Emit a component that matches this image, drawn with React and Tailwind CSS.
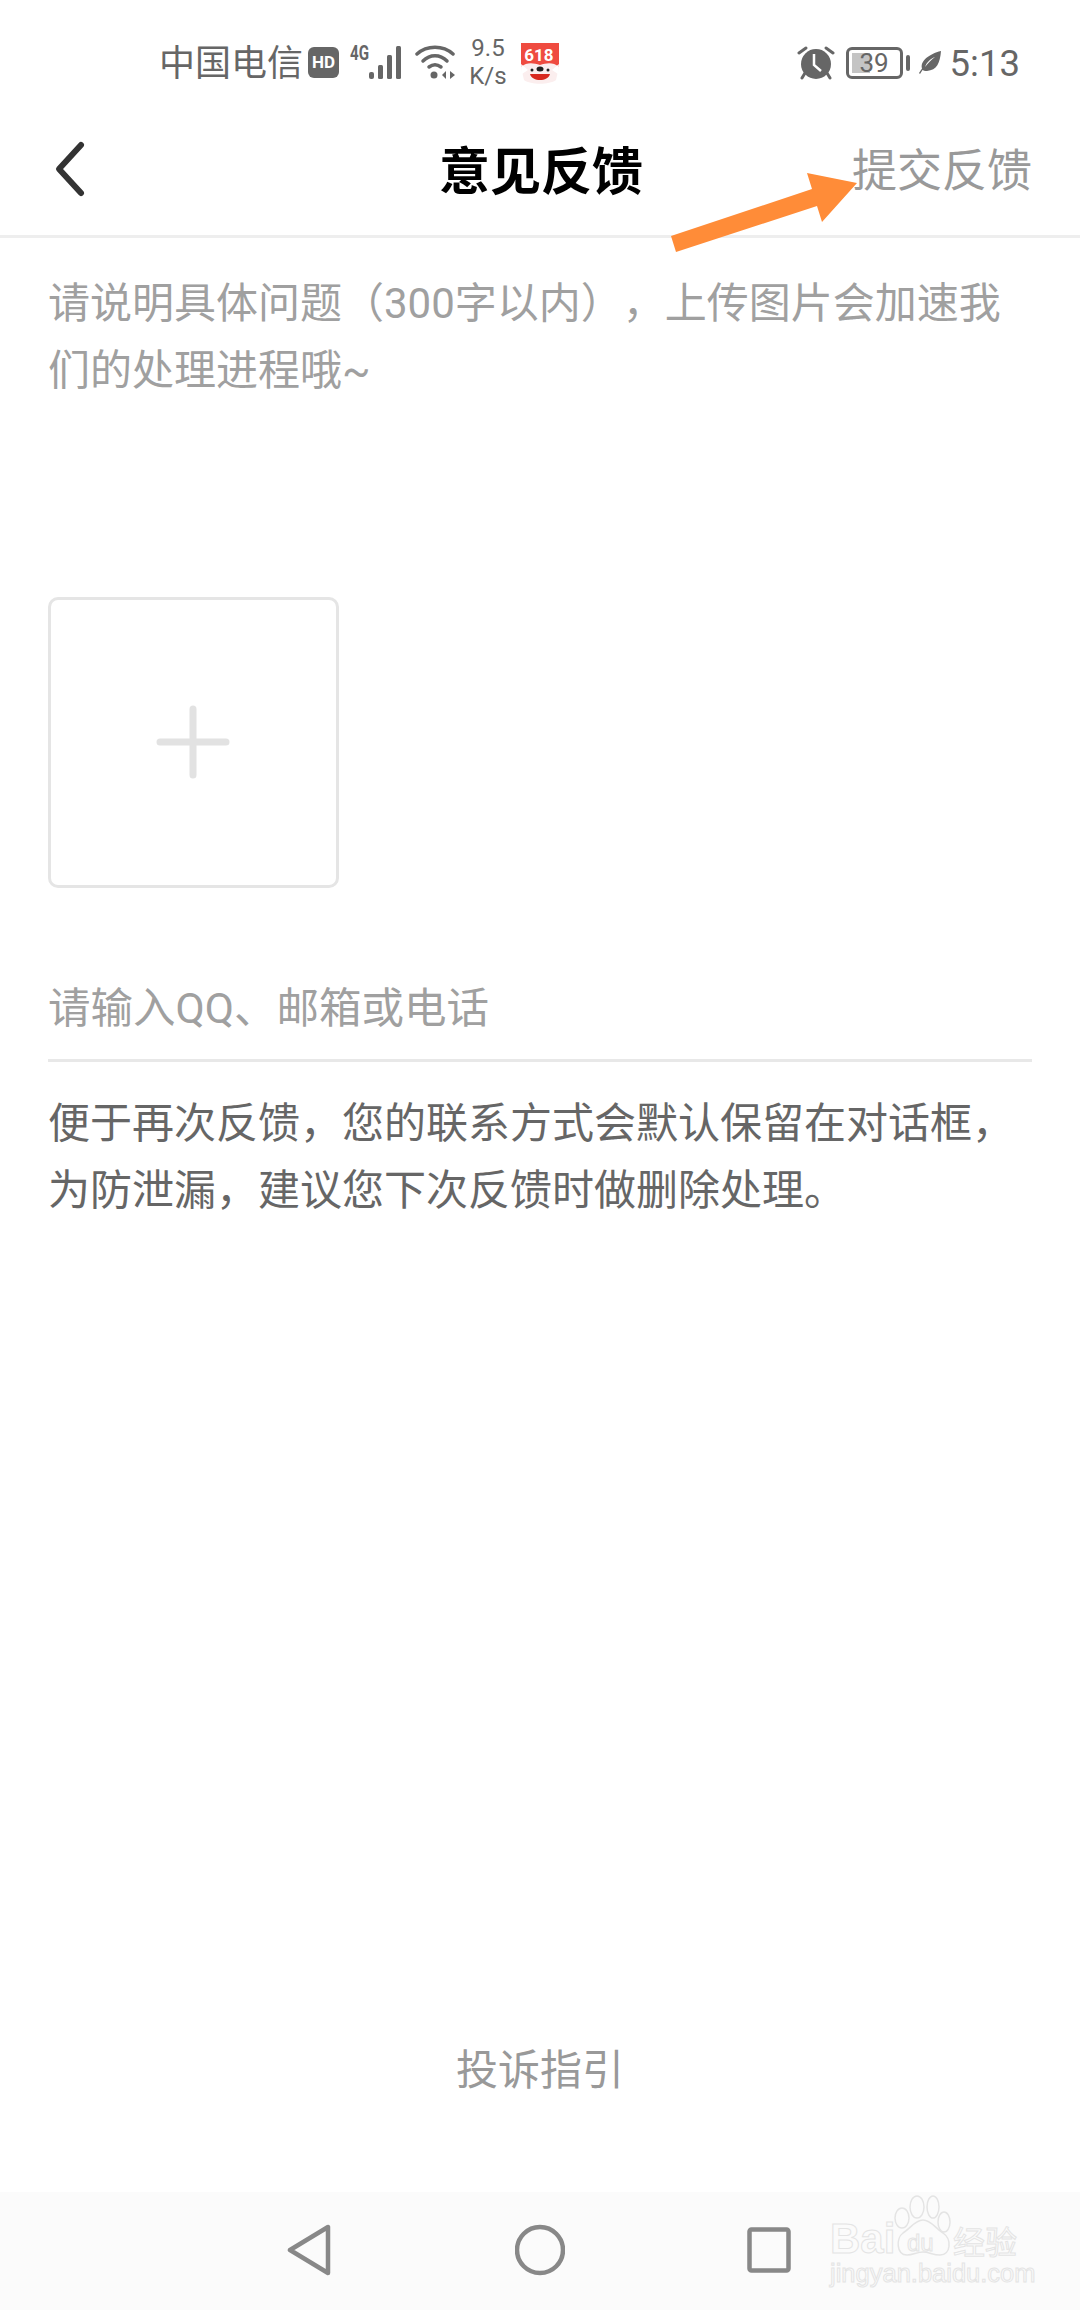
const cjk = "font-['Roboto','Noto_Sans_CJK_SC',sans-serif]";

function SignalIcon() {
  return (
    <svg width="56" height="36" viewBox="0 0 56 36" fill="#666" overflow="visible">
      <text x="0" y="16" fontSize="20" fontWeight="700" fontFamily="Roboto, sans-serif" textLength="19" lengthAdjust="spacingAndGlyphs">4G</text>
      <rect x="19" y="28" width="5" height="7" rx="2" />
      <rect x="28" y="21" width="5" height="14" rx="1.5" />
      <rect x="37" y="11" width="5" height="24" rx="1.5" />
      <rect x="46" y="2" width="5" height="33" rx="1.5" />
    </svg>
  );
}

function WifiIcon() {
  return (
    <svg width="42" height="36" viewBox="0 0 42 36" fill="none" stroke="#666" strokeWidth="3.5" strokeLinecap="round">
      <path d="M2 10C12 1 28 1 38 10" />
      <path d="M8 17C15 10 25 10 32 17" />
      <path d="M14 23C18 20 22 20 26 23" />
      <circle cx="19" cy="31" r="3.5" fill="#666" stroke="none" />
      <path d="M31 27V35L27 31Z" fill="#666" stroke="none" />
      <path d="M35 27V35L40 31Z" fill="#666" stroke="none" />
    </svg>
  );
}

function Badge618() {
  return (
    <svg width="38" height="42" viewBox="0 0 38 42">
      <rect x="0" y="0" width="38" height="24" fill="#ef4b40" />
      <text x="18" y="18" textAnchor="middle" fontSize="17" fontWeight="700" fill="#fff" fontFamily="Roboto, sans-serif">618</text>
      <path d="M0 24C6 19 12 20 19 22C26 20 32 19 38 24L35 37C28 42 10 42 3 37Z" fill="#fbeeee" />
      <path d="M0 21L7 27L1 31Z" fill="#fff" />
      <path d="M38 21L31 27L37 31Z" fill="#fff" />
      <ellipse cx="19" cy="26" rx="3.5" ry="2.5" fill="#222" />
      <circle cx="11" cy="27" r="1.5" fill="#222" />
      <circle cx="27" cy="27" r="1.5" fill="#222" />
      <path d="M9 31H29C27 39 11 39 9 31Z" fill="#d8281e" />
    </svg>
  );
}

function AlarmIcon() {
  return (
    <svg width="38" height="34" viewBox="0 0 38 34">
      <path d="M2 7L9 2" stroke="#666" strokeWidth="3" strokeLinecap="round" />
      <path d="M36 7L29 2" stroke="#666" strokeWidth="3" strokeLinecap="round" />
      <path d="M8 27L5 32M30 27L33 32" stroke="#666" strokeWidth="3" strokeLinecap="round" />
      <circle cx="19" cy="18" r="15" fill="#666" />
      <path d="M17 8V19L24 25" fill="none" stroke="#fff" strokeWidth="2.5" />
    </svg>
  );
}

function LeafIcon() {
  return (
    <svg width="22" height="24" viewBox="0 0 22 24" fill="#666">
      <path d="M22 0C21 12 18 19 8 20C6 20 4 19.5 3.5 19L1 23L0 22L3 17.5C1 10 10 3 22 0ZM6 16C9 12 12 9 16 6C11 8 8 11 6 16Z" fillRule="evenodd" />
    </svg>
  );
}

function StatusBar() {
  return (
    <div className={`h-[110px] flex items-start pt-[44px] pl-[159px] pr-[60px] text-[#666] ${cjk}`}>
      <span className="text-[36px] leading-[40px] w-[140px] whitespace-nowrap">中国电信</span>
      <span className="ml-[9px] mt-[3px] w-[31px] h-[31px] rounded-[6px] bg-[#666] text-white text-[17px] font-bold leading-[31px] text-center">HD</span>
      <span className="ml-[11px] flex"><SignalIcon /></span>
      <span className="ml-[9px] flex"><WifiIcon /></span>
      <span className="ml-[12px] -mt-[10px] w-[38px] flex flex-col items-center text-[24px] leading-[28px] whitespace-nowrap">
        <span>9.5</span>
        <span>K/s</span>
      </span>
      <span className="ml-[14px] -mt-[1px] flex"><Badge618 /></span>
      <span className="ml-auto flex items-center h-[38px]">
        <AlarmIcon />
        <span className="ml-[11px] flex items-center gap-[3px]">
          <span className="relative w-[57px] h-[32px] border-[3px] border-[#666] rounded-[6px] overflow-hidden flex items-center justify-center">
            <span className="absolute left-[3px] top-[3px] bottom-[3px] w-[18px] bg-[#c4c4c4]"></span>
            <span className="relative text-[26px] leading-none">39</span>
          </span>
          <span className="w-[4px] h-[16px] bg-[#666] rounded-[2px]"></span>
        </span>
        <span className="flex ml-[9px]"><LeafIcon /></span>
        <span className="ml-[9px] text-[36.5px] leading-[40px] mt-[2px]">5:13</span>
      </span>
    </div>
  );
}

function Header() {
  return (
    <div className="h-[128px] grid grid-cols-[1fr_auto_1fr] items-center border-b-[3px] border-[#eeeeee] pl-[50px] pr-[48px]">
      <svg width="40" height="60" viewBox="0 0 40 60" fill="none" stroke="#333" strokeWidth="6" strokeLinecap="round" strokeLinejoin="round" className="-translate-y-[4px]">
        <path d="M31 6L9 30L31 54" />
      </svg>
      <h1 className="text-[51px] leading-none font-bold text-black">意见反馈</h1>
      <span className="text-[45px] leading-none text-[#999] text-right -translate-y-[1px]">提交反馈</span>
    </div>
  );
}

function BottomNav() {
  return (
    <div className="relative h-[118px] bg-[#fbfbfb] flex items-center justify-center">
      <div className="flex items-center ml-[-3px] mt-[-2px]">
        <svg width="44" height="52" viewBox="0 0 44 52" fill="none" stroke="#888" strokeWidth="4.5" strokeLinejoin="round">
          <path d="M41 3V49L3 26Z" />
        </svg>
        <svg width="50" height="52" viewBox="0 0 50 52" fill="none" stroke="#888" strokeWidth="4.5" className="ml-[184px]">
          <circle cx="25" cy="26" r="23" />
        </svg>
        <svg width="44" height="46" viewBox="0 0 44 46" fill="none" stroke="#888" strokeWidth="4.5" strokeLinejoin="round" className="ml-[182px]">
          <rect x="2.5" y="2.5" width="39" height="41" rx="2" />
        </svg>
      </div>
      <Watermark />
    </div>
  );
}

function Watermark() {
  return (
    <div className="absolute left-[828px] top-[3px] w-[196px] h-[92px] font-['Liberation_Sans',sans-serif] text-transparent [-webkit-text-stroke:1px_#e4e4e4]">
      <span className="absolute left-[2px] top-[23px] text-[42px] leading-none font-bold">Bai</span>
      <svg width="62" height="64" viewBox="0 0 62 64" fill="none" stroke="#e4e4e4" strokeWidth="1.5" className="absolute left-[65px] top-0">
        <ellipse cx="24" cy="12" rx="7" ry="11" />
        <ellipse cx="40" cy="12" rx="6" ry="11" />
        <ellipse cx="9" cy="23" rx="7" ry="10" />
        <ellipse cx="51" cy="27" rx="6" ry="10" />
        <path d="M30 25C22 25 18 33 10 38C3 43 3 60 14 60C20 60 24 57 30 57C36 57 40 60 47 60C58 60 59 44 50 38C42 33 38 25 30 25Z" />
      </svg>
      <span className="absolute left-[79px] top-[36px] text-[24px] leading-none">du</span>
      <span className="absolute left-[125px] top-[29px] text-[32px] leading-none font-['Noto_Sans_CJK_SC',sans-serif] whitespace-nowrap">经验</span>
      <span className="absolute left-[2px] top-[66px] text-[25.5px] leading-none whitespace-nowrap">jingyan.baidu.com</span>
    </div>
  );
}

export default function App() {
  return (
    <div className={`relative w-[1080px] h-[2310px] bg-white flex flex-col overflow-hidden ${cjk}`}>
      <StatusBar />
      <Header />
      <div className="flex-1 flex flex-col px-[48px] text-[42px] leading-[67px] [text-spacing-trim:space-all]">
        <p className="pt-[32px] text-[#a0a0a0]">请说明具体问题（300字以内），上传图片会加速我们的处理进程哦~</p>
        <div className="mt-[193px] w-[291px] h-[291px] border-[3px] border-[#e5e5e5] rounded-[10px] flex items-center justify-center">
          <svg width="74" height="74" viewBox="0 0 74 74" stroke="#e2e2e2" strokeWidth="7" strokeLinecap="round" className="-ml-[2px] -mt-[2px]">
            <path d="M37 4V70M4 37H70" />
          </svg>
        </div>
        <div className="mt-[87px] pb-[17px] border-b-[3px] border-[#e8e8e8] text-[#a0a0a0] text-[42.5px]">请输入QQ、邮箱或电话</div>
        <p className="mt-[28px] text-[#666]">便于再次反馈，您的联系方式会默认保留在对话框，为防泄漏，建议您下次反馈时做删除处理。</p>
        <div className="mt-auto mb-[88px] text-center text-[#999]">投诉指引</div>
      </div>
      <BottomNav />
      <svg width="200" height="90" viewBox="0 0 200 90" className="absolute left-[665px] top-[168px]">
        <path d="M6 68L147 21L142 5L192 15L157 54L152 38L11 84Z" fill="#ff8c38" />
      </svg>
    </div>
  );
}
